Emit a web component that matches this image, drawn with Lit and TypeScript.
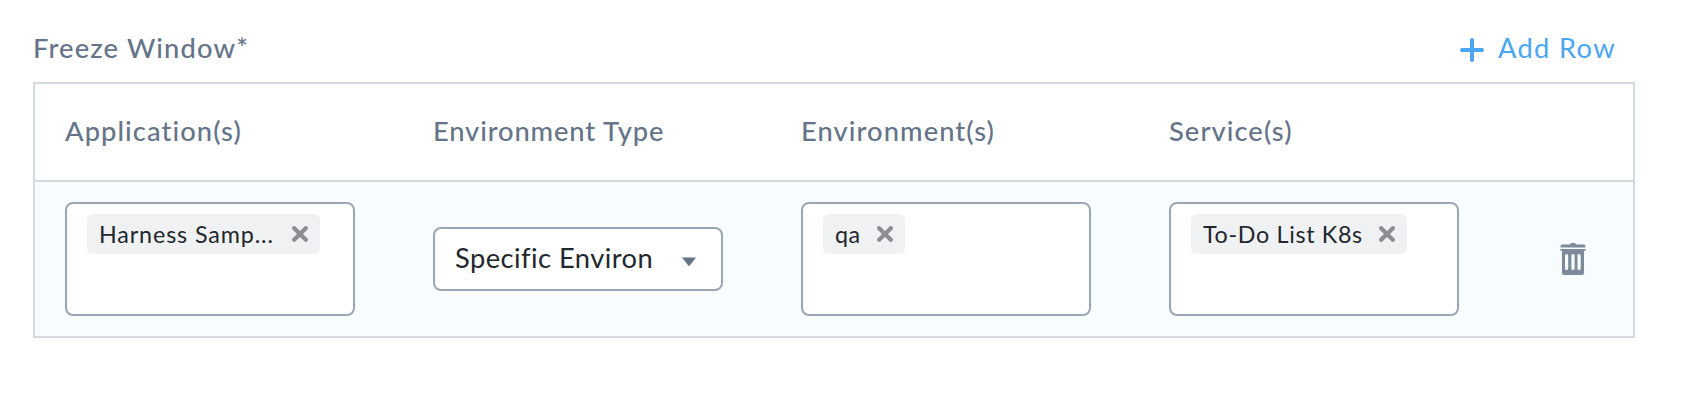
import { LitElement, html, css } from "lit";
import { customElement, property } from "lit/decorators.js";

@customElement("tag-box")
class TagBox extends LitElement {
  @property() label = "";
  @property() fit = "normal";
  static styles = css`
    :host { display: block; box-sizing: border-box; width: 290px; height: 114px; padding: 10px 20px; border: 2px solid #9aa5b6; border-radius: 8px; background: #fff; }
    .chip { display: inline-flex; align-items: center; box-sizing: border-box; height: 40px; padding: 0 12px; border-radius: 6px; background: #f0f1f3; color: #22272d; font-size: 23.3px; line-height: 40px; white-space: nowrap; }
    .normal { letter-spacing: 0.67px; }
    .wide { letter-spacing: 0.87px; padding-right: 2px; }
    .short { letter-spacing: 0.5px; }
    .text { padding-bottom: 1px; }
    svg { display: block; margin-left: 16px; }
  `;
  render() {
    return html`<div class="chip"><span class="text ${this.fit}">${this.label}</span>
      <svg width="16" height="16" viewBox="0 0 16 16"><path d="M2.2 2.2 13.8 13.8M13.8 2.2 2.2 13.8" stroke="#8b8e91" stroke-width="4.2" stroke-linecap="round" /></svg></div>`;
  }
}

@customElement("app-root")
class AppRoot extends LitElement {
  static styles = css`
    :host { display: block; box-sizing: border-box; height: 408px; padding: 29px 59px 0 33px; background: #fff; font-family: Lato, "Open Sans", sans-serif; font-size: 27.3px; }
    .top { display: flex; justify-content: space-between; height: 53px; line-height: 38px; color: #657489; }
    .title { font-weight: 500; letter-spacing: 1.15px; }
    .add { display: flex; align-items: flex-start; padding-right: 19px; color: #4ca5f2; font-weight: 400; }
    .add svg { margin: 9px 14px 0 0; }
    .add span { letter-spacing: 1.35px; }
    .table { box-sizing: border-box; width: 1602px; height: 256px; border: 2px solid #d5dae0; }
    .row { display: grid; grid-template-columns: repeat(4, 368px) 1fr; padding-left: 30px; align-items: center; }
    .head { height: 92px; padding-bottom: 4px; border-bottom: 2px solid #d5dae0; color: #657489; font-weight: 500; letter-spacing: 1.08px; }
    .head .tight { letter-spacing: 0.87px; }
    .body { height: 154px; background: #f8fcff; }
    .select { display: flex; align-items: center; justify-content: space-between; box-sizing: border-box; width: 290px; height: 64px; padding: 0 25px 0 20px; border: 2px solid #9aa5b6; border-radius: 8px; background: #fff; color: #22272d; letter-spacing: 0.45px; }
    .select span { padding-bottom: 3px; }
    .select svg { margin-top: 5px; }
    .trash { display: block; margin-left: 23px; }
  `;
  render() {
    return html`
      <div class="top">
        <div class="title">Freeze Window*</div>
        <div class="add">
          <svg width="24" height="24" viewBox="0 0 24 24"><path d="M12 2v20M2 12h20" stroke="#4ca5f2" stroke-width="4" stroke-linecap="round" /></svg>
          <span>Add Row</span>
        </div>
      </div>
      <div class="table">
        <div class="row head">
          <div>Application(s)</div><div class="tight">Environment Type</div><div>Environment(s)</div><div>Service(s)</div>
        </div>
        <div class="row body">
          <tag-box label="Harness Samp..." fit="wide"></tag-box>
          <div class="select"><span>Specific Environ</span><svg width="14" height="9" viewBox="0 0 14 9"><path d="M0 .5H14L8 8.3Q7 9.3 6 8.3Z" fill="#657489" /></svg></div>
          <tag-box label="qa" fit="short"></tag-box>
          <tag-box label="To-Do List K8s"></tag-box>
          <svg class="trash" width="26" height="32" viewBox="0 0 26 32" fill="#7c8a9c">
            <path d="M10 1.5Q10 0 11.5 0H14.500Q16 0 16 1.500H24Q25.500 1.500 25.500 3V4.500H.5V3Q.5 1.500 2 1.500Z" />
            <path fill-rule="evenodd" d="M.3 6H25.700V7.700H24V30Q24 32 22 32H4Q2 32 2 30V7.700H.3ZM5 12.500V25.500Q5 27 6.600 27T8.200 25.500V12.500Q8.200 11 6.600 11T5 12.500ZM11.400 12.500V25.500Q11.400 27 13 27T14.600 25.500V12.500Q14.600 11 13 11T11.400 12.500ZM17.500 12.500V25.500Q17.500 27 19.100 27T20.700 25.500V12.500Q20.700 11 19.100 11T17.500 12.500Z" />
          </svg>
        </div>
      </div>`;
  }
}
